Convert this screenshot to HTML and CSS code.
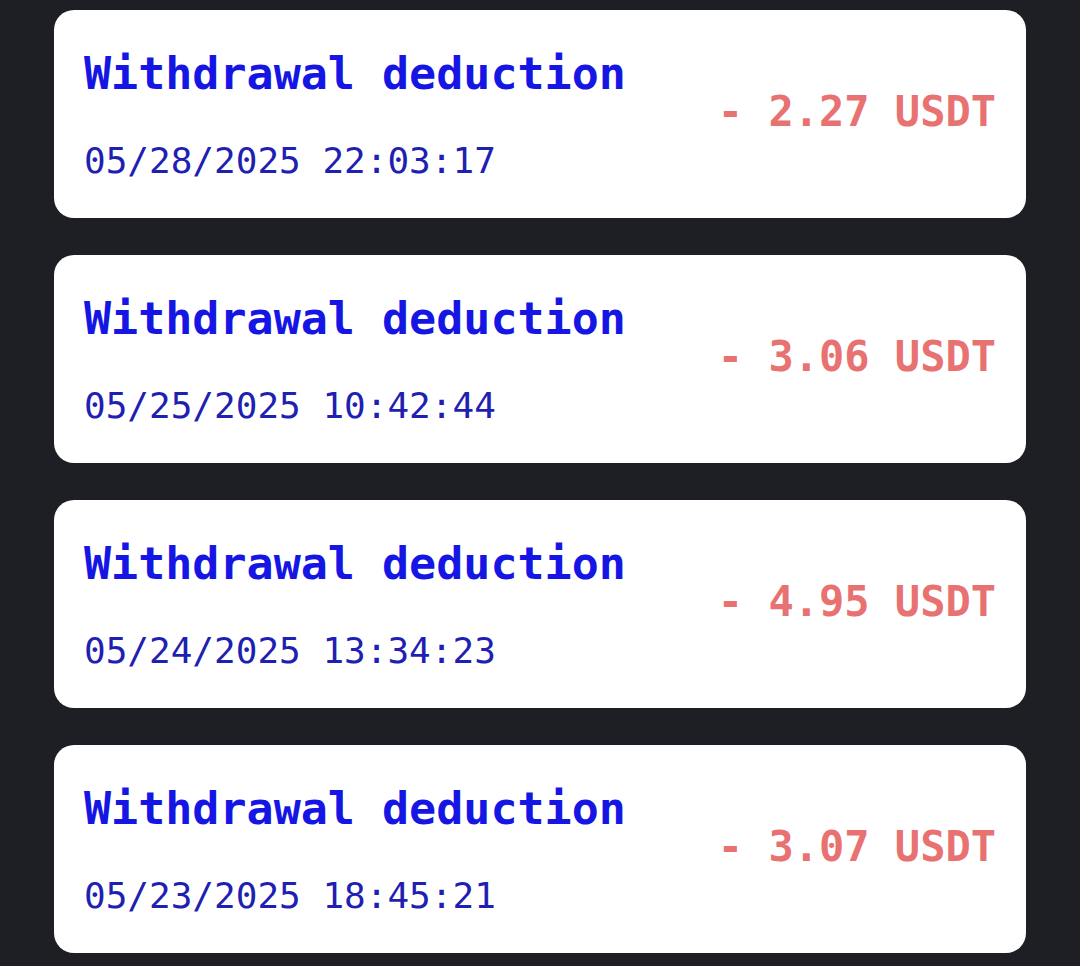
FILE: index.html
```html
<!DOCTYPE html>
<html lang="en">
<head>
<meta charset="utf-8">
<title>Transactions</title>
<link rel="stylesheet" href="styles.css">
</head>
<body>
<main class="ledger">
  <div class="entry">
    <div class="entry-info">
      <div class="entry-title">Withdrawal deduction</div>
      <div class="entry-date">05/28/2025 22:03:17</div>
    </div>
    <div class="entry-amount">- 2.27 USDT</div>
  </div>
  <div class="entry">
    <div class="entry-info">
      <div class="entry-title">Withdrawal deduction</div>
      <div class="entry-date">05/25/2025 10:42:44</div>
    </div>
    <div class="entry-amount">- 3.06 USDT</div>
  </div>
  <div class="entry">
    <div class="entry-info">
      <div class="entry-title">Withdrawal deduction</div>
      <div class="entry-date">05/24/2025 13:34:23</div>
    </div>
    <div class="entry-amount">- 4.95 USDT</div>
  </div>
  <div class="entry">
    <div class="entry-info">
      <div class="entry-title">Withdrawal deduction</div>
      <div class="entry-date">05/23/2025 18:45:21</div>
    </div>
    <div class="entry-amount">- 3.07 USDT</div>
  </div>
</main>
</body>
</html>
```

FILE: styles.css
```css
html, body {
  margin: 0;
  padding: 0;
  background: #1e1f24;
}

body {
  font-family: "DejaVu Sans Mono", "Liberation Mono", monospace;
}

.ledger {
  display: flex;
  flex-direction: column;
  gap: 37px;
  padding: 10px 54px 20px;
}

.entry {
  display: flex;
  align-items: center;
  justify-content: space-between;
  background: #ffffff;
  border-radius: 20px;
  padding: 37px 30px 36px 30px;
}

.entry-info {
  display: flex;
  flex-direction: column;
  gap: 38px;
}

.entry-title {
  font-size: 45px;
  line-height: 54px;
  font-weight: 600;
  color: #1616e4;
}

.entry-date {
  font-size: 36px;
  line-height: 43px;
  color: #1f1fb2;
}

.entry-amount {
  font-size: 42px;
  line-height: 50px;
  font-weight: 600;
  color: #e87272;
  margin-top: -6px;
  white-space: nowrap;
}
```
